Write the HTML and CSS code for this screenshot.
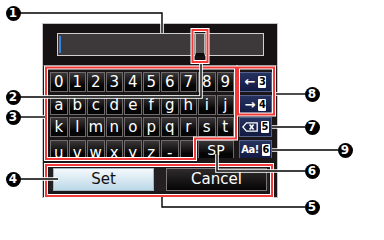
FILE: index.html
```html
<!DOCTYPE html>
<html>
<head>
<meta charset="utf-8">
<link rel="stylesheet" href="styles.css">
</head>
<body>
<div class="stage">
  <div class="panel">
    <div class="entry">
      <div class="field"><span class="caret"></span><span class="cell"></span></div>
    </div>
    <div class="kb">
      <div class="keys">
        <span class="key">0</span><span class="key">1</span><span class="key">2</span><span class="key">3</span><span class="key">4</span><span class="key">5</span><span class="key">6</span><span class="key">7</span><span class="key">8</span><span class="key">9</span>
        <span class="key">a</span><span class="key">b</span><span class="key">c</span><span class="key">d</span><span class="key">e</span><span class="key">f</span><span class="key">g</span><span class="key">h</span><span class="key">i</span><span class="key">j</span>
        <span class="key">k</span><span class="key">l</span><span class="key">m</span><span class="key">n</span><span class="key">o</span><span class="key">p</span><span class="key">q</span><span class="key">r</span><span class="key">s</span><span class="key">t</span>
        <span class="key low">u</span><span class="key low">v</span><span class="key low">w</span><span class="key low">x</span><span class="key low">y</span><span class="key low">z</span><span class="key low">-</span><span class="key"></span><span class="key sp">SP</span>
      </div>
      <div class="side">
        <span class="fkey"><span class="arr">←</span><span class="hint">3</span></span>
        <span class="fkey"><span class="arr">→</span><span class="hint">4</span></span>
        <span class="fkey"><svg class="bs" width="16" height="10" viewBox="0 0 16 10"><path d="M4.5 0.8 H15.2 V9.2 H4.5 L0.8 5 Z" fill="none" stroke="#fff" stroke-width="1.3"/><path d="M7.6 2.6 L11.6 7.4 M11.6 2.6 L7.6 7.4" stroke="#fff" stroke-width="1.6"/></svg><span class="hint">5</span></span>
        <span class="fkey"><span class="aa">Aa!</span><span class="hint">6</span></span>
      </div>
    </div>
    <div class="actions"><span class="btn set">Set</span><span class="btn cancel">Cancel</span></div>
  </div>

  <svg class="overlay" width="384" height="217" viewBox="0 0 384 217">
    <g fill="none" stroke="#fff" stroke-width="4">
      <rect x="192.5" y="30" width="15" height="32"/>
      <polygon points="46,67.5 236,67.5 236,138.5 195,138.5 195,159 46,159"/>
      <rect x="238" y="67.5" width="36" height="47"/>
      <rect x="46" y="165" width="226" height="31"/>
    </g>
    <g fill="none" stroke="#f23a3a" stroke-width="2">
      <rect x="192.5" y="30" width="15" height="32"/>
      <polygon points="46,67.5 236,67.5 236,138.5 195,138.5 195,159 46,159"/>
      <rect x="238" y="67.5" width="36" height="47"/>
      <rect x="46" y="165" width="226" height="31"/>
    </g>
    <g fill="none" stroke="#fff" stroke-width="3.6">
      <polyline points="20,13 162,13 162,33"/>
      <polyline points="20,97 201,97 201,64"/>
      <polyline points="20,117 45,117"/>
      <polyline points="20,179 58,179"/>
      <polyline points="162,197 162,207 305,207"/>
      <polyline points="217,154 217,171 305,171"/>
      <polyline points="272,127 305,127"/>
      <polyline points="276,94 305,94"/>
      <polyline points="272,150 338,150"/>
    </g>
    <g fill="none" stroke="#000" stroke-width="1.4">
      <polyline points="20,13 162,13 162,33"/>
      <polyline points="20,97 201,97 201,64"/>
      <polyline points="20,117 45,117"/>
      <polyline points="20,179 58,179"/>
      <polyline points="162,197 162,207 305,207"/>
      <polyline points="217,154 217,171 305,171"/>
      <polyline points="272,127 305,127"/>
      <polyline points="276,94 305,94"/>
      <polyline points="272,150 338,150"/>
    </g>
  </svg>

  <span class="mk m1">1</span>
  <span class="mk m2">2</span>
  <span class="mk m3">3</span>
  <span class="mk m4">4</span>
  <span class="mk m5">5</span>
  <span class="mk m6">6</span>
  <span class="mk m7">7</span>
  <span class="mk m8">8</span>
  <span class="mk m9">9</span>
</div>
</body>
</html>
```

FILE: styles.css
```css
* { box-sizing: border-box; }
html, body { margin: 0; padding: 0; background: #fff; }
.stage {
  position: relative;
  width: 384px;
  height: 217px;
  overflow: hidden;
  font-family: "DejaVu Sans", sans-serif;
}
.panel {
  margin: 23px 0 0 42px;
  width: 236px;
  height: 175px;
  border: 1px solid #c4c4c4;
  background: #1b1618;
  display: flex;
  flex-direction: column;
}
.entry {
  height: 42px;
  padding: 9px 0 0 14px;
  background: #161214;
  border-bottom: 1px solid #4a4547;
}
.field {
  width: 207px;
  height: 23px;
  border: 1px solid #cfcfcf;
  background: #3d393b;
  display: flex;
  align-items: flex-start;
}
.caret {
  width: 2px;
  height: 17px;
  margin: 2px 0 0 1px;
  background: #3b82d6;
}
.cell {
  width: 10px;
  height: 23px;
  margin: -1px 0 0 134px;
  background: #514c4e;
  border: 1px solid #b5b5b5;
  border-bottom: 3px solid #0c0a0b;
}
.kb {
  display: flex;
  height: 92px;
  padding: 6px 0 0 7px;
  overflow: hidden;
}
.keys {
  display: grid;
  grid-template-columns: repeat(10, 17.5px);
  grid-auto-rows: 20px;
  gap: 2.5px 1px;
  width: 184px;
}
.key {
  border: 1px solid #6f6a6b;
  background: linear-gradient(#3a3637, #060505 70%);
  color: #fff;
  font-size: 15px;
  line-height: 18px;
  text-align: center;
  overflow: hidden;
}
.low { line-height: 25px; }
.sp { grid-column: span 2; font-size: 14px; line-height: 19px; }
.side {
  margin-left: 5px;
  width: 33px;
  display: grid;
  grid-auto-rows: 20px;
  row-gap: 2.5px;
}
.fkey {
  display: flex;
  align-items: center;
  justify-content: center;
  gap: 3px;
  border: 1px solid #56618c;
  background: linear-gradient(#26325f, #111a42);
  color: #fff;
}
.arr { font-size: 13px; font-weight: bold; line-height: 18px; }
.aa {
  font-family: "DejaVu Sans Condensed", "DejaVu Sans", sans-serif;
  font-weight: bold;
  font-size: 11px;
  letter-spacing: -0.4px;
  line-height: 18px;
}
.bs { display: block; }
.hint {
  width: 8px;
  height: 12px;
  border-radius: 1px;
  background: #fff;
  color: #000;
  font-family: "DejaVu Sans Condensed", "DejaVu Sans", sans-serif;
  font-weight: bold;
  font-size: 11px;
  line-height: 12px;
  text-align: center;
}
.actions {
  margin: 10px 0 0 6px;
  width: 220px;
  height: 23px;
  display: flex;
  gap: 12px;
  padding: 0 2px 0 4px;
  background: #241f21;
}
.btn {
  flex: 1;
  font-size: 15px;
  line-height: 21px;
  text-align: center;
  border: 1px solid;
}
.set {
  background: linear-gradient(#f4f9fc, #bcd8e7);
  color: #111;
  border-color: #9fb8c6;
}
.cancel {
  background: linear-gradient(#2f2b2c, #060505);
  color: #fff;
  border-color: #7b7677;
}
.overlay {
  position: absolute;
  left: 0;
  top: 0;
}
.mk {
  position: absolute;
  width: 15px;
  height: 15px;
  border-radius: 50%;
  background: #000;
  color: #fff;
  font-weight: bold;
  font-size: 12px;
  line-height: 15px;
  text-align: center;
}
.m1 { left: 5.5px; top: 5.5px; }
.m2 { left: 5.5px; top: 89.5px; }
.m3 { left: 5.5px; top: 109.5px; }
.m4 { left: 5.5px; top: 171.5px; }
.m5 { left: 304.5px; top: 199.5px; }
.m6 { left: 304.5px; top: 163.5px; }
.m7 { left: 304.5px; top: 119.5px; }
.m8 { left: 304.5px; top: 86.5px; }
.m9 { left: 337.5px; top: 142.5px; }
```
